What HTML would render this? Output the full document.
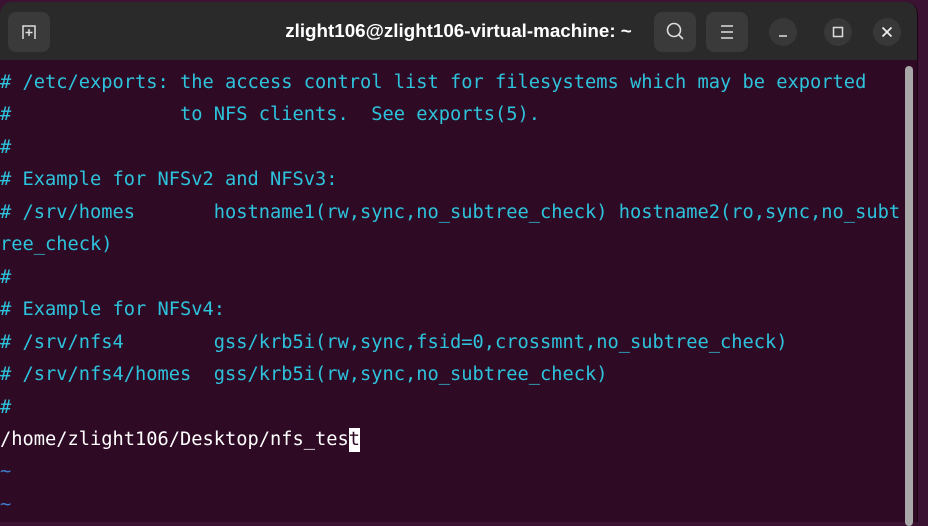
<!DOCTYPE html>
<html><head><style>
body{margin:0;width:928px;height:508px;overflow:hidden;background:#3b1232;font-family:"Liberation Sans",sans-serif;position:relative}
.win{position:absolute;left:0;top:2px;width:917px;height:520px;background:#2f0a24;border-radius:12px 12px 0 0;overflow:hidden;border-right:1px solid #1a0514}
.tb{height:58px;background:#2a2a2a;position:relative}
.btn{position:absolute;top:10px;width:42px;height:40px;background:#3a3a3a;border-radius:8px}
.c{position:absolute;top:16px;width:28px;height:28px;border-radius:50%;background:#383838}
.title{position:absolute;left:0;width:917px;top:18px;text-align:center;color:#fff;font-weight:bold;font-size:18.8px;padding-left:0}
.term{position:absolute;left:0;top:67px;font-family:"DejaVu Sans Mono","Liberation Mono",monospace;font-size:18.7px;line-height:32.45px;color:#2ec3dc;white-space:pre}
.w{color:#fff}
.cur{background:#fff;color:#2f0a24;display:inline-block;line-height:24px}
.t{color:#3f7ecb}
.sb{position:absolute;left:905px;top:66px;width:8px;height:460px;background:#a8a8a8;border-radius:4px}
</style></head><body>
<div class="win">
<div class="tb">
<div class="btn" style="left:8px"><svg width="42" height="40"><path d="M15 27V14h12v13M21 17v7M17.5 20.5h7" stroke="#ddd" stroke-width="1.5" fill="none"/></svg></div>
<div class="title">zlight106@zlight106-virtual-machine: ~</div>
<div class="btn" style="left:654px"><svg width="42" height="40"><circle cx="20" cy="18" r="6.5" stroke="#ddd" stroke-width="1.6" fill="none"/><path d="M25 23l4 4" stroke="#ddd" stroke-width="1.6"/></svg></div>
<div class="btn" style="left:706px"><svg width="42" height="40"><path d="M15 14h12M15 20h12M15 26h12" stroke="#ddd" stroke-width="1.5"/></svg></div>
<div class="c" style="left:769px"><svg width="28" height="28"><path d="M10 18h8" stroke="#ddd" stroke-width="1.6"/></svg></div>
<div class="c" style="left:824px"><svg width="28" height="28"><rect x="9.5" y="9.5" width="9" height="9" stroke="#ddd" stroke-width="1.5" fill="none"/></svg></div>
<div class="c" style="left:873px"><svg width="28" height="28"><path d="M9.5 9.5l9 9M18.5 9.5l-9 9" stroke="#eee" stroke-width="1.7"/></svg></div>
</div>
</div>
<div class="term"># /etc/exports: the access control list for filesystems which may be exported
#               to NFS clients.  See exports(5).
#
# Example for NFSv2 and NFSv3:
# /srv/homes       hostname1(rw,sync,no_subtree_check) hostname2(ro,sync,no_subt
ree_check)
#
# Example for NFSv4:
# /srv/nfs4        gss/krb5i(rw,sync,fsid=0,crossmnt,no_subtree_check)
# /srv/nfs4/homes  gss/krb5i(rw,sync,no_subtree_check)
#
<span class="w">/home/zlight106/Desktop/nfs_tes<span class="cur">t</span></span>
<span class="t">~</span>
<span class="t">~</span></div>
<div class="sb"></div>
</body></html>
